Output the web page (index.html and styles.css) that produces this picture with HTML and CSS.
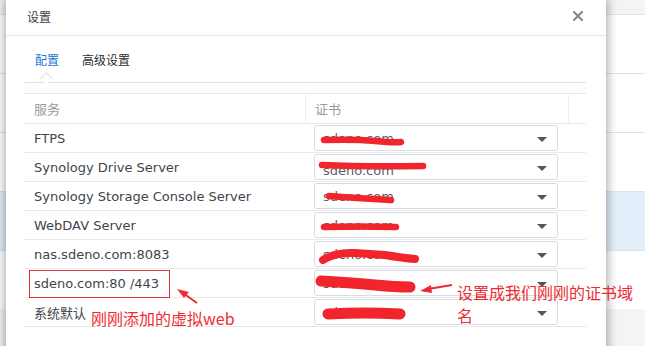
FILE: index.html
```html
<!DOCTYPE html>
<html lang="zh-CN">
<head>
<meta charset="utf-8">
<title>设置</title>
<link rel="stylesheet" href="styles.css">
</head>
<body>
<div class="page">
  <div class="bg-row"></div>
  <div class="bg-row"></div>
  <div class="bg-row"></div>
  <div class="bg-row bg-sel"></div>
  <div class="bg-row"></div>
</div>

<div class="dialog">
  <div class="dlg-head">
    <span class="dlg-title">设置</span>
    <svg class="close" width="10" height="10" viewBox="0 0 10 10"><path d="M1 1L9 9M9 1L1 9" stroke="#8a8a8a" stroke-width="2.2" stroke-linecap="square"/></svg>
  </div>
  <div class="tabs">
    <span class="tab active">配置</span>
    <span class="tab">高级设置</span>
  </div>
  <div class="grid">
    <div class="row head">
      <div class="cell c1">服务</div>
      <div class="cell c2">证书</div>
      <div class="cell c3"></div>
    </div>
    <div class="row">
      <div class="cell c1">FTPS</div>
      <div class="cell c2"><div class="select"><span class="val">sdeno.com</span><svg class="mark" viewBox="0 0 244 26"><path d="M9 14 Q40 13 60 15 T86 16" /></svg><i class="caret"></i></div></div>
    </div>
    <div class="row">
      <div class="cell c1">Synology Drive Server</div>
      <div class="cell c2"><div class="select"><span class="val low">sdeno.com</span><svg class="mark" viewBox="0 0 244 26"><path d="M7 10 Q50 12 108 11" /></svg><i class="caret"></i></div></div>
    </div>
    <div class="row">
      <div class="cell c1">Synology Storage Console Server</div>
      <div class="cell c2"><div class="select"><span class="val">sdeno.com</span><svg class="mark" viewBox="0 0 244 26"><path d="M14 12 Q40 14 76 16" /></svg><i class="caret"></i></div></div>
    </div>
    <div class="row">
      <div class="cell c1">WebDAV Server</div>
      <div class="cell c2"><div class="select"><span class="val">sdeno.com</span><svg class="mark" viewBox="0 0 244 26"><path d="M9 14 Q45 13 81 14" /></svg><i class="caret"></i></div></div>
    </div>
    <div class="row">
      <div class="cell c1">nas.sdeno.com:8083</div>
      <div class="cell c2"><div class="select"><span class="val">sdeno.com</span><svg class="mark thick" viewBox="0 0 244 26"><path d="M8 18 Q20 10 40 11 L70 13 Q88 16 100 17" /></svg><i class="caret"></i></div></div>
    </div>
    <div class="row">
      <div class="cell c1">sdeno.com:80 /443</div>
      <div class="cell c2"><div class="select"><span class="val">sdeno.com</span><svg class="mark fat" viewBox="0 0 244 26"><path d="M6 10 Q40 12 60 14 T95 16" /></svg><i class="caret"></i></div></div>
    </div>
    <div class="row">
      <div class="cell c1">系统默认</div>
      <div class="cell c2"><div class="select"><span class="val">sdeno.com</span><svg class="mark fat" viewBox="0 0 244 26"><path d="M13 14 Q50 12 85 14" /></svg><i class="caret"></i></div></div>
    </div>
  </div>
</div>

<div class="note-box"></div>
<svg class="arrows" width="645" height="346" viewBox="0 0 645 346">
  <path d="M197 303 L183 293" stroke="#ee2b32" stroke-width="2" fill="none"/>
  <path d="M177 289 L189 292 L184 298 Z" fill="#ee2b32"/>
  <path d="M452 285 L428 289" stroke="#ee2b32" stroke-width="2" fill="none"/>
  <path d="M420 291 L431 285 L432 293 Z" fill="#ee2b32"/>
</svg>
<div class="note note-left">刚刚添加的虚拟web</div>
<div class="note note-right"><div class="note-line">设置成我们刚刚的证书域</div><div class="note-line">名</div></div>
</body>
</html>
```
FILE: styles.css
```css
html, body {
  margin: 0;
  padding: 0;
}
body {
  width: 645px;
  height: 346px;
  overflow: hidden;
  position: relative;
  background: #ffffff;
  font-family: "DejaVu Sans", "Noto Sans CJK SC", sans-serif;
}
.page {
  padding-top: 14px;
  background: #f4f4f4;
  height: 332px;
}
.bg-row {
  height: 58px;
  border-top: 1px solid #e2e2e2;
  background: #ffffff;
}
.bg-row.bg-sel {
  background: #e3eefa;
}
.dialog {
  position: absolute;
  left: 6px;
  top: 0;
  width: 600px;
  height: 360px;
  background: #ffffff;
  box-shadow: 0 0 9px 2px rgba(0, 0, 0, 0.32);
}
.dlg-head {
  height: 35px;
  border-bottom: 1px solid #e1e5ea;
  display: flex;
  align-items: center;
  justify-content: space-between;
  padding: 0 23px 0 21px;
}
.dlg-title {
  font-family: "Noto Sans CJK SC", sans-serif;
  font-size: 12px;
  color: #3c3c3c;
  margin-top: -3px;
}
.close {
  margin-top: -4px;
}
.tabs {
  margin: 0 20px 0 19px;
  height: 46px;
  border-bottom: 1px solid #d9e0e8;
  display: flex;
  align-items: center;
  gap: 23px;
  padding-left: 10px;
  font-family: "Noto Sans CJK SC", sans-serif;
  font-size: 12px;
  color: #2e2e2e;
}
.tab {
  position: relative;
  padding-top: 1px;
}
.tab.active {
  color: #1a78d6;
}
.tab.active::after {
  content: "";
  position: absolute;
  left: 7px;
  top: 24px;
  width: 8px;
  height: 8px;
  background: #ffffff;
  border-left: 1px solid #d9e0e8;
  border-top: 1px solid #d9e0e8;
  transform: rotate(45deg);
}
.grid {
  margin: 10px 20px 0 18px;
  border-top: 1px solid #e4e8ec;
  font-size: 13px;
  color: #3f454c;
}
.row {
  display: grid;
  grid-template-columns: 282px 263px 17px;
  height: 28px;
  border-bottom: 1px solid #e6e9ed;
  align-items: center;
}
.row.head {
  height: 29px;
  font-family: "Noto Sans CJK SC", sans-serif;
  color: #9b9b9b;
  font-size: 13px;
}
.row.head .cell {
  height: 27px;
  line-height: 27px;
  border-right: 1px solid #e9ecef;
}
.row.head .c3 {
  border-right: none;
}
.cell.c1 {
  padding-left: 10px;
  white-space: nowrap;
}
.row .c2 {
  grid-column: 2 / 4;
  padding-left: 8px;
}
.row.head .c2 {
  grid-column: auto;
  padding-left: 9px;
}
.select {
  position: relative;
  height: 24px;
  border: 1px solid #d7dde4;
  border-radius: 3px;
  display: flex;
  align-items: center;
  padding-left: 8px;
  box-sizing: content-box;
  width: 234px;
}
.val {
  color: #5a6067;
  font-size: 13px;
}
.val.low {
  margin-top: 6px;
}
.mark {
  position: absolute;
  left: 0;
  top: 0;
  width: 244px;
  height: 26px;
  overflow: visible;
}
.mark path {
  fill: none;
  stroke: #f2252c;
  stroke-width: 6.5;
  stroke-linecap: round;
  stroke-linejoin: round;
}
.mark.thick path {
  stroke-width: 8;
}
.mark.fat path {
  stroke-width: 11;
}
.caret {
  position: absolute;
  right: 10px;
  top: 11px;
  width: 0;
  height: 0;
  border-left: 5px solid transparent;
  border-right: 5px solid transparent;
  border-top: 5px solid #555555;
}
.note-box {
  position: absolute;
  left: 29px;
  top: 270px;
  width: 139px;
  height: 26px;
  border: 1px solid #e0323a;
}
.arrows {
  position: absolute;
  left: 0;
  top: 0;
}
.note {
  position: absolute;
  font-family: "Noto Sans CJK SC", sans-serif;
  color: #ee2b32;
  font-size: 16px;
  line-height: 21px;
}
.note-left {
  left: 91px;
  top: 308px;
}
.note-right {
  left: 457px;
  top: 281px;
}
.note-line {
  height: 23px;
  line-height: 23px;
}
```
